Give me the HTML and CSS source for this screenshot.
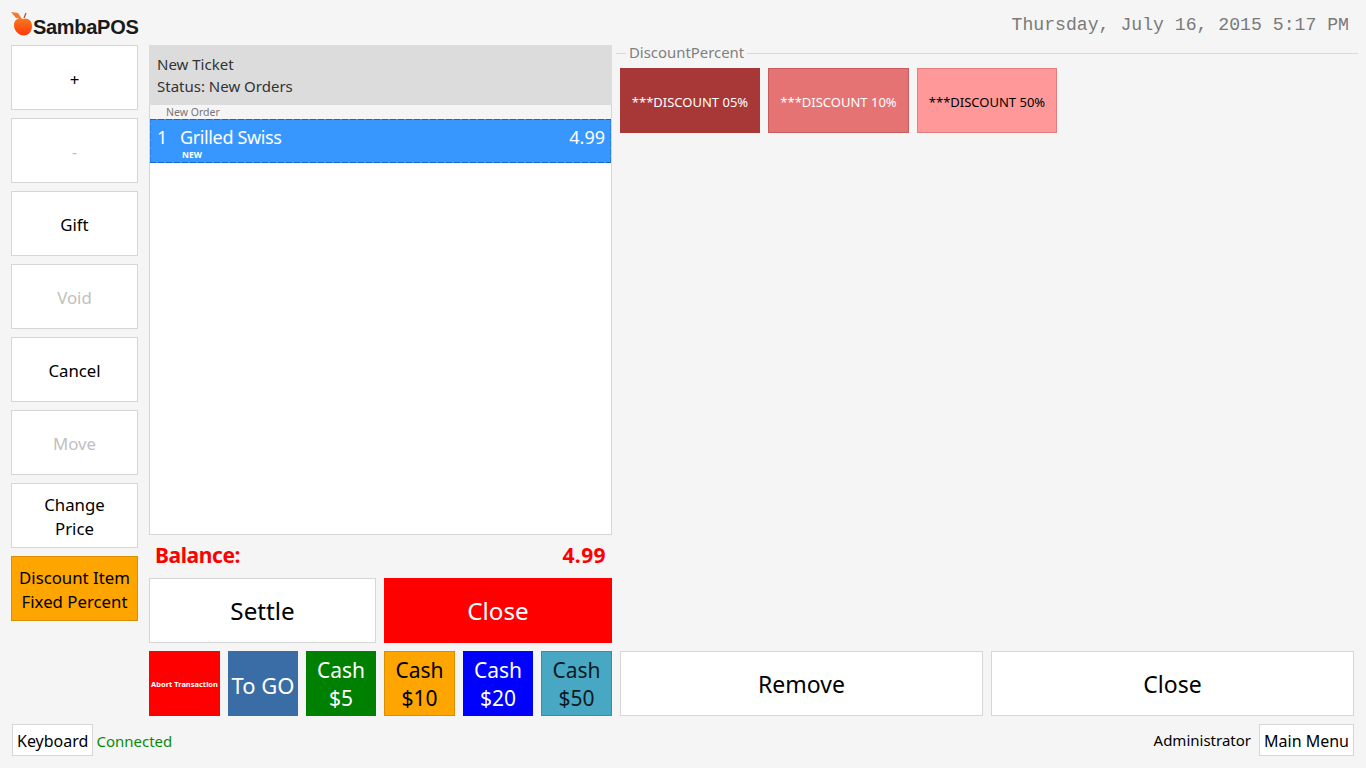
FILE: index.html
```html
<!DOCTYPE html>
<html lang="en">
<head>
<meta charset="utf-8">
<title>SambaPOS</title>
<link rel="stylesheet" href="styles.css">
</head>
<body>
<div class="app">
  <header class="top">
    <div class="logo">
      <svg class="apple" width="23" height="24" viewBox="0 0 23 24">
        <defs><linearGradient id="g" x1="0" y1="0" x2="0" y2="1"><stop offset="0" stop-color="#f47a20"/><stop offset="1" stop-color="#ff3808"/></linearGradient></defs>
        <path d="M0 0 L7 1 L11 7 L5 6 Z" fill="#f47a2a"/>
        <path d="M13 6 L15 1" stroke="#b8481a" stroke-width="1.2" fill="none"/>
        <path d="M3 13 C3 8 8 5 12 7 C16 5 21 8 21 14 C21 20 17 23.500 13 23.500 C8 23.500 3 19 3 13 Z" fill="url(#g)"/>
      </svg>
      <span class="logo-text">SambaPOS</span>
    </div>
    <div class="clock">Thursday, July 16, 2015 5:17 PM</div>
  </header>
  <main class="main">
    <aside class="side">
      <button class="btn plus">+</button>
      <button class="btn off">-</button>
      <button class="btn">Gift</button>
      <button class="btn off">Void</button>
      <button class="btn">Cancel</button>
      <button class="btn off">Move</button>
      <button class="btn">Change<br>Price</button>
      <button class="btn orange">Discount Item<br>Fixed Percent</button>
    </aside>
    <section class="ticket">
      <div class="t-head">
        <div>New Ticket</div>
        <div>Status: New Orders</div>
      </div>
      <div class="t-list">
        <div class="t-group">New Order</div>
        <div class="t-order">
          <div class="t-line"><span class="qty">1</span><span class="name">Grilled Swiss</span><span class="price">4.99</span></div>
          <div class="tag">NEW</div>
        </div>
      </div>
      <div class="balance"><span class="bal-label">Balance:</span><span class="bal-value">4.99</span></div>
      <div class="t-actions">
        <button class="btn big large">Settle</button>
        <button class="btn big large red">Close</button>
      </div>
      <div class="t-quick">
        <button class="q q-abort">Abort Transaction</button>
        <button class="q q-togo">To GO</button>
        <button class="q q-green">Cash<br>$5</button>
        <button class="q q-orange">Cash<br>$10</button>
        <button class="q q-blue">Cash<br>$20</button>
        <button class="q q-teal">Cash<br>$50</button>
      </div>
    </section>
    <section class="right">
      <div class="legend"><span class="tick"></span><span class="legend-text">DiscountPercent</span><span class="rule"></span></div>
      <div class="discounts">
        <button class="d d1">***DISCOUNT 05%</button>
        <button class="d d2">***DISCOUNT 10%</button>
        <button class="d d3">***DISCOUNT 50%</button>
      </div>
      <div class="r-actions">
        <button class="btn big">Remove</button>
        <button class="btn big">Close</button>
      </div>
    </section>
  </main>
  <footer class="foot">
    <div class="foot-left"><button class="btn small">Keyboard</button><span class="conn">Connected</span></div>
    <div class="foot-right"><span class="admin">Administrator</span><button class="btn small">Main Menu</button></div>
  </footer>
</div>
</body>
</html>
```
FILE: styles.css
```css
* { box-sizing: border-box; }
html, body { margin: 0; height: 100%; }
body { background: #f5f5f5; font-family: "Noto Sans", "Open Sans", sans-serif; color: #000; overflow: hidden; }
button { font-family: inherit; margin: 0; padding: 0; cursor: default; }
.app { width: 1366px; height: 768px; display: flex; flex-direction: column; }

.top { height: 45px; display: flex; justify-content: space-between; padding: 0 17px 0 11px; }
.logo { display: flex; align-items: flex-start; padding-top: 12px; }
.apple { display: block; }
.logo-text { font: bold 20px/26px "Liberation Sans", sans-serif; letter-spacing: -0.3px; color: #1a1a1a; margin: 2px 0 0 -1px; }
.clock { font: 18.150px/20px "Liberation Mono", monospace; color: #7a7a7a; padding-top: 15px; }

.main { height: 671px; display: flex; padding-left: 11px; }
.btn { background: #fff; border: 1px solid #d6d6d6; color: #000; font-size: 16.800px; line-height: 24px; padding-top: 2px; }
.btn.off { color: #c0c0c0; }
.btn.orange { background: #ffa500; border-color: #d99000; }
.btn.plus { padding-top: 4px; }
.btn.big { font-size: 23px; padding-top: 1px; }
.btn.large { font-size: 24.200px; }
.btn.red { background: #f00; border-color: #f00; color: #fff; }

.side { width: 127px; display: flex; flex-direction: column; gap: 8px; }
.side .btn { height: 65px; }

.ticket { width: 463px; margin-left: 11px; display: flex; flex-direction: column; }
.t-head { height: 60px; background: #dcdcdc; padding: 8px 8px 0; font-size: 15px; line-height: 22px; color: #333; }
.t-list { height: 430px; background: #fff; border: 1px solid #d6d6d6; border-top: 0; }
.t-group { height: 14px; background: #f5f5f5; font-size: 10.500px; line-height: 15px; color: #777; padding-left: 16px; }
.t-order {
  height: 44px;
  color: #fff;
  padding: 5px 6px 0 7px;
  background-color: #3797ff;
  background-image:
    repeating-linear-gradient(90deg, #1568c8 0 6px, transparent 6px 8px),
    repeating-linear-gradient(90deg, #1568c8 0 6px, transparent 6px 8px),
    repeating-linear-gradient(0deg, #2a7fe0 0 6px, transparent 6px 8px),
    repeating-linear-gradient(0deg, #2a7fe0 0 6px, transparent 6px 8px);
  background-size: 100% 1px, 100% 1px, 1px 100%, 1px 100%;
  background-position: top, bottom, left, right;
  background-repeat: no-repeat;
}
.t-line { display: flex; font-size: 18px; line-height: 26px; }
.qty { width: 23px; }
.name { flex: 1; letter-spacing: -0.370px; }
.tag { font-size: 8.500px; font-weight: bold; line-height: 10px; padding-left: 25px; }

.balance { height: 43px; display: flex; justify-content: space-between; align-items: center; padding: 0 6px 3px 6px; font-size: 21px; font-weight: bold; color: #f00; }
.bal-label { letter-spacing: -0.400px; }
.bal-value { letter-spacing: 0.400px; }
.t-actions { height: 65px; display: grid; grid-template-columns: 227px 228px; gap: 8px; }
.t-quick { height: 65px; margin-top: 8px; display: grid; grid-template-columns: 71px 70px 70px 71px 70px 71px; gap: 8px; }
.q { border: 1px solid transparent; font-size: 21px; line-height: 28px; color: #fff; padding-top: 1px; }
.q-abort { background: #f00; font-size: 7.500px; font-weight: bold; line-height: 10px; white-space: nowrap; padding-top: 0; }
.q-togo { background: #3a6ca6; font-size: 22px; padding-top: 2px; }
.q-green { background: #008000; }
.q-orange { background: #ffa500; border-color: #d99000; color: #000; }
.q-blue { background: #00f; }
.q-teal { background: #48a8c4; border-color: #3a8fa8; color: #0d1a22; }

.right { width: 734px; margin-left: 8px; display: flex; flex-direction: column; }
.legend { height: 16px; margin: 0 -4px 7px; display: flex; align-items: center; gap: 3px; }
.tick { width: 10px; height: 1px; background: #d9d9d9; }
.legend-text { font-size: 14.900px; line-height: 16px; color: #808080; margin-bottom: 2px; }
.rule { flex: 1; height: 1px; background: #d9d9d9; }
.discounts { display: flex; gap: 8px; flex: 1; align-items: flex-start; }
.d { width: 140px; height: 65px; font-size: 13px; border: 1px solid transparent; color: #fff; white-space: nowrap; padding-top: 2px; }
.d1 { background: #a83838; }
.d2 { width: 141px; background: #e57373; border-color: #c85c5c; }
.d3 { background: #ff9999; border-color: #e57f7f; color: #000; }
.r-actions { height: 65px; display: grid; grid-template-columns: 363px 363px; gap: 8px; }

.foot { flex: 1; display: flex; justify-content: space-between; align-items: flex-start; padding: 8px 12px 0; }
.foot-left, .foot-right { display: flex; align-items: center; }
.btn.small { height: 32px; padding: 1px 4px 0; font-size: 16px; }
.conn { font-size: 15px; color: #0a8a0a; margin-left: 3px; padding-top: 1px; }
.admin { font-size: 15px; margin-right: 8px; }
```
